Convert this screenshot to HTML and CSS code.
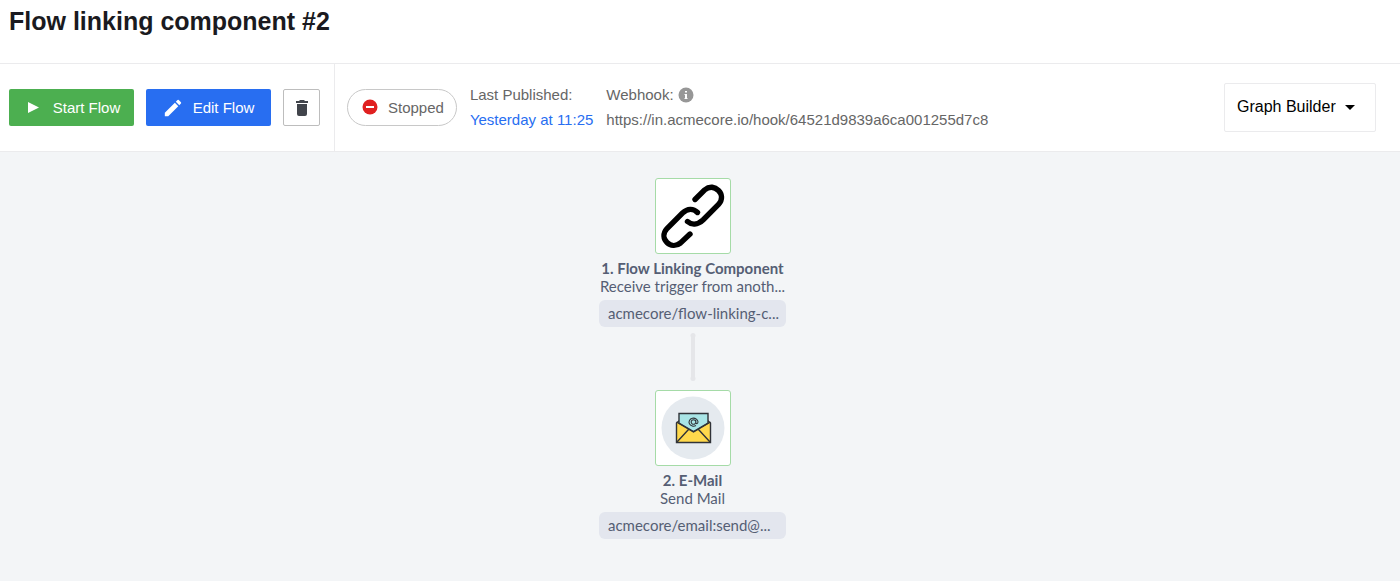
FILE: index.html
```html
<!DOCTYPE html>
<html lang="en">
<head>
<meta charset="utf-8">
<meta name="viewport" content="width=device-width, initial-scale=1">
<title>Flow linking component #2</title>
<link rel="stylesheet" href="styles.css">
</head>
<body>
<header class="page-header">
  <h1 class="page-title">Flow linking component #2</h1>
</header>
<section class="toolbar">
  <div class="actions">
    <button type="button" class="btn btn-start">
      <svg class="btn-icon" viewBox="0 0 20 20" aria-hidden="true"><path d="M5 4v11l11-5.500z" fill="currentColor"/></svg>
      Start Flow
    </button>
    <button type="button" class="btn btn-edit">
      <svg class="btn-icon" viewBox="1 1 22 22" aria-hidden="true"><path d="M3 17.25V21h3.75L17.81 9.94l-3.75-3.75L3 17.25zM20.71 7.04a1 1 0 0 0 0-1.41l-2.34-2.34a1 1 0 0 0-1.41 0l-1.83 1.83 3.75 3.75 1.83-1.83z" fill="currentColor"/></svg>
      Edit Flow
    </button>
    <button type="button" class="btn btn-delete" aria-label="Delete flow">
      <svg class="trash-icon" viewBox="0 0 12 16" aria-hidden="true"><path d="M0 1h3l1-1h4l1 1h3v2H0zM1 4h10v10q0 2-2 2H3q-2 0-2-2z" fill="currentColor"/></svg>
    </button>
  </div>
  <div class="details">
    <div class="status">
      <svg class="status-icon" viewBox="0 0 16 16" aria-hidden="true"><circle cx="8" cy="8" r="7.5" fill="#e02020"/><path d="M4 7h8v2H4z" fill="#fff"/></svg>
      Stopped
    </div>
    <div class="info">
      <span>Last Published:</span>
      <a class="link" href="#published">Yesterday at 11:25</a>
    </div>
    <div class="info">
      <span class="info-label">Webhook:
        <svg class="info-icon" viewBox="0 0 16 16" aria-hidden="true"><circle cx="8" cy="8" r="7.5" fill="#979797"/><path d="M7 4h2v1.500H7zM6.500 7H9v4h.5v1h-3v-1H7V8h-.5z" fill="#fff"/></svg>
      </span>
      <span>https://in.acmecore.io/hook/64521d9839a6ca001255d7c8</span>
    </div>
    <div class="view-picker">
      <select class="view-select" aria-label="View"><option>Graph Builder</option></select>
      <svg class="caret" viewBox="0 0 10 5" aria-hidden="true"><path d="M0 0h10L5 5z" fill="#000"/></svg>
    </div>
  </div>
</section>
<main class="canvas">
  <article class="node">
    <div class="node-card">
      <svg class="node-art" viewBox="0 0 74 74" fill="none" stroke="#000" stroke-width="5.400" stroke-linecap="round" aria-hidden="true">
        <path d="M39 20.500L48.500 11C54 6.500 59 8 62.500 11.500C66 15 67 20.500 62.500 25.500L47 41C41.500 46 35.500 46 31.500 42.500"/>
        <path d="M41.500 33.500C37 29 31.500 29.500 26.500 34L11 49.500C6.500 54.500 7.500 60 11 63.500C14.500 67 20 67.500 24.500 64L34 55"/>
      </svg>
    </div>
    <h2 class="node-title">1. Flow Linking Component</h2>
    <p class="node-text">Receive trigger from anoth...</p>
    <p class="node-tag">acmecore/flow-linking-c...</p>
  </article>
  <svg class="connector" viewBox="0 0 6 48" aria-hidden="true"><path d="M3 2v44" stroke="#e5e6e9" stroke-width="4"/><circle cx="3" cy="2.500" r="2.500" fill="#e5e6e9"/><circle cx="3" cy="45.500" r="2.500" fill="#e5e6e9"/></svg>
  <article class="node">
    <div class="node-card">
      <svg class="node-art" viewBox="0 0 74 74" aria-hidden="true">
        <circle cx="37" cy="37" r="31.500" fill="#e5eaef"/>
        <path d="M20.500 32l2.500-2h29l2.500 2v19.500h-34z" fill="#ffd94c" stroke="#303338" stroke-width="1.400"/>
        <path d="M23 22.500h29v9.500L37.500 40.500 23 32z" fill="#a9e5e6" stroke="#303338" stroke-width="1.400"/>
        <path d="M20.500 31L37.500 41l17-10M21 51l11.500-12.500M54 51L42.500 38.500" fill="none" stroke="#303338" stroke-width="1.400"/>
        <path d="M39.800 31a2.300 2.300 0 1 1-4.600 0a2.300 2.300 0 1 1 4.600 0M39.800 28.700v2.800c0 1.800 2.200 1.500 2.200-.7a4.500 4 0 1 0-2 3.700" fill="none" stroke="#303338" stroke-width="1.100"/>
      </svg>
    </div>
    <h2 class="node-title">2. E-Mail</h2>
    <p class="node-text">Send Mail</p>
    <p class="node-tag">acmecore/email:send@...</p>
  </article>
</main>
</body>
</html>
```
FILE: styles.css
```css
* {
  box-sizing: border-box;
}

body {
  display: flex;
  flex-direction: column;
  min-height: 100vh;
  margin: 0;
  background: #fff;
  color: #666;
  font: 15px/25px "Liberation Sans", Arial, sans-serif;
}

.page-header {
  padding: 6px 9px 27px;
  border-bottom: 1px solid #ebebed;
}

.page-title {
  margin: 0;
  color: #1a1a20;
  font-size: 25px;
  line-height: 30px;
}

.toolbar {
  display: flex;
  border-bottom: 1px solid #ebebed;
}

.actions {
  display: flex;
  align-items: center;
  gap: 12px;
  padding: 0 14px 0 9px;
  border-right: 1px solid #ebebed;
}

.btn {
  display: flex;
  align-items: center;
  justify-content: center;
  gap: 10px;
  min-width: 125px;
  height: 37px;
  padding: 0 12px;
  border: 0;
  border-radius: 2px;
  color: #fff;
  font: inherit;
  white-space: nowrap;
  cursor: pointer;
}

.btn-start {
  background: #4caf50;
}

.btn-edit {
  background: #286ef1;
}

.btn-delete {
  min-width: 37px;
  padding: 0;
  border: 1px solid #bdbdbd;
  background: #fff;
  color: #41444b;
}

.btn-icon {
  width: 20px;
  height: 20px;
}

.trash-icon {
  width: 12px;
  height: 16px;
}

.details {
  display: flex;
  flex: 1;
  align-items: center;
  gap: 13px;
  padding: 18px 24px 19px 12px;
}

.status {
  display: flex;
  align-items: center;
  gap: 10px;
  height: 37px;
  padding: 0 12px 0 14px;
  border: 1px solid #c8c8c8;
  border-radius: 19px;
}

.status-icon,
.info-icon {
  width: 16px;
  height: 16px;
}

.info {
  display: flex;
  flex-direction: column;
  white-space: nowrap;
}

.info-label {
  display: flex;
  align-items: center;
  gap: 4px;
}

.link {
  color: #286ef1;
  text-decoration: none;
}

.view-picker {
  position: relative;
  margin-left: auto;
}

.view-select {
  display: block;
  appearance: none;
  height: 49px;
  padding: 0 39px 0 12px;
  border: 1px solid #ebebed;
  border-radius: 2px;
  background: #fff;
  color: #000;
  font: 16px/20px "Liberation Sans", Arial, sans-serif;
}

.caret {
  position: absolute;
  top: 22px;
  right: 21px;
  width: 10px;
  height: 5px;
  pointer-events: none;
}

.canvas {
  display: flex;
  flex: 1;
  flex-direction: column;
  align-items: center;
  padding: 26px 15px 41px 0;
  background: #f3f5f7;
  color: #555e74;
  font-family: Lato, "Noto Sans", sans-serif;
}

.node {
  display: flex;
  flex-direction: column;
  align-items: center;
  width: 187px;
}

.node-card {
  width: 76px;
  height: 76px;
  margin-bottom: 5px;
  border: 1px solid #a5dba7;
  border-radius: 3px;
  background: #fff;
}

.node-art {
  display: block;
  width: 74px;
  height: 74px;
}

.node-title,
.node-text,
.node-tag {
  margin: 0;
  font-size: 15px;
  line-height: 18px;
  white-space: nowrap;
}

.node-tag {
  align-self: stretch;
  margin-top: 5px;
  padding: 0 9px;
  border-radius: 6px;
  background: #e3e6ee;
  line-height: 27px;
}

.connector {
  width: 6px;
  height: 48px;
  margin: 6px 0 9px;
}
```
